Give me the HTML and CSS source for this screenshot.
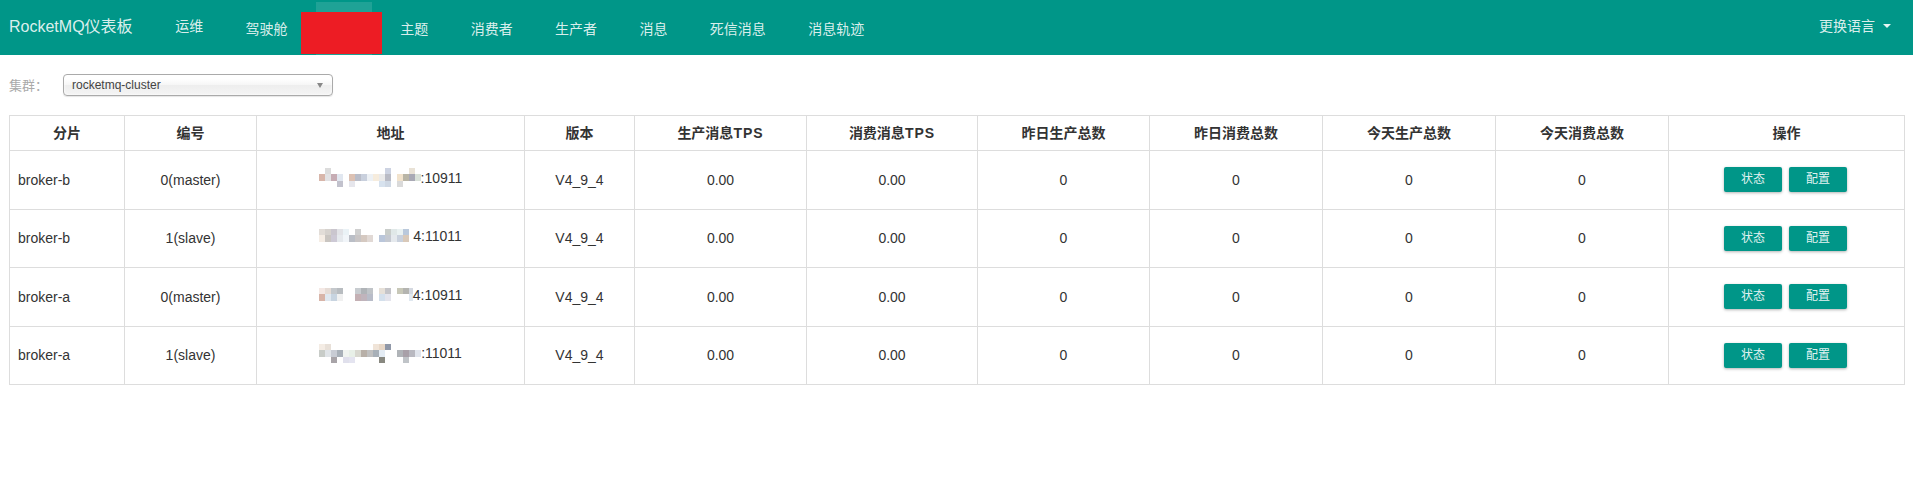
FILE: index.html
```html
<!DOCTYPE html>
<html lang="zh-CN">
<head>
<meta charset="utf-8">
<title>RocketMQ仪表板</title>
<link rel="stylesheet" href="styles.css">
</head>
<body>
<nav class="navbar">
  <div class="brand">RocketMQ仪表板</div>
  <ul class="nav-items">
    <li class="nav-item nav-item-up">运维</li>
    <li class="nav-item">驾驶舱</li>
    <li class="nav-item active">集群<span class="redact"></span></li>
    <li class="nav-item">主题</li>
    <li class="nav-item">消费者</li>
    <li class="nav-item">生产者</li>
    <li class="nav-item">消息</li>
    <li class="nav-item">死信消息</li>
    <li class="nav-item">消息轨迹</li>
  </ul>
  <div class="lang">更换语言<span class="caret"></span></div>
</nav>

<main class="content">
  <div class="filter-row">
    <label class="filter-label">集群：</label>
    <div class="select">
      <span class="select-text">rocketmq-cluster</span>
      <span class="select-arrow"></span>
    </div>
  </div>

  <table class="broker-table">
    <colgroup>
      <col class="c-shard"><col class="c-no"><col class="c-addr"><col class="c-ver">
      <col class="c-tps"><col class="c-tps2"><col class="c-num"><col class="c-num2">
      <col class="c-num3"><col class="c-num3"><col class="c-op">
    </colgroup>
    <thead>
      <tr>
        <th>分片</th><th>编号</th><th>地址</th><th>版本</th>
        <th>生产消息<span class="tps">TPS</span></th><th>消费消息<span class="tps">TPS</span></th><th>昨日生产总数</th><th>昨日消费总数</th>
        <th>今天生产总数</th><th>今天消费总数</th><th>操作</th>
      </tr>
    </thead>
    <tbody>
      <tr>
        <td class="left">broker-b</td>
        <td>0(master)</td>
        <td><span class="addr"><svg class="mosaic" width="102" height="19" viewBox="0 0 102 19">
          <rect x="6" y="0" width="6" height="6" fill="#dcdcdc"/>
          <rect x="66" y="0" width="6" height="6" fill="#cdd3e2"/>
          <rect x="90" y="0" width="6" height="6" fill="#e9e2d6"/>
          <rect x="0" y="6" width="6" height="7" fill="#d8b6aa"/>
          <rect x="6" y="6" width="6" height="7" fill="#e2e2e4"/>
          <rect x="12" y="6" width="6" height="7" fill="#c6acb4"/>
          <rect x="18" y="6" width="6" height="7" fill="#e1e7f0"/>
          <rect x="30" y="6" width="6" height="7" fill="#dcc1b3"/>
          <rect x="36" y="6" width="6" height="7" fill="#b9bdc9"/>
          <rect x="42" y="6" width="6" height="7" fill="#c9d0dd"/>
          <rect x="48" y="6" width="6" height="7" fill="#edf1f5"/>
          <rect x="54" y="6" width="6" height="7" fill="#f6ecdd"/>
          <rect x="60" y="6" width="6" height="7" fill="#eaeaea"/>
          <rect x="66" y="6" width="6" height="7" fill="#b9bbc5"/>
          <rect x="78" y="6" width="6" height="7" fill="#f2e3cd"/>
          <rect x="84" y="6" width="6" height="7" fill="#b9b5a6"/>
          <rect x="90" y="6" width="6" height="7" fill="#a9a9b5"/>
          <rect x="96" y="6" width="6" height="7" fill="#d9e1d9"/>
          <rect x="18" y="13" width="6" height="6" fill="#c2c2cd"/>
          <rect x="30" y="13" width="6" height="6" fill="#e6e6ec"/>
          <rect x="60" y="13" width="6" height="6" fill="#d7e2ee"/>
          <rect x="66" y="13" width="6" height="6" fill="#cfd8e4"/>
          <rect x="78" y="13" width="6" height="6" fill="#dadada"/>
        </svg>:10911</span></td>
        <td>V4_9_4</td>
        <td>0.00</td><td>0.00</td><td>0</td><td>0</td><td>0</td><td>0</td>
        <td><div class="ops"><button class="btn">状态</button><button class="btn">配置</button></div></td>
      </tr>
      <tr>
        <td class="left">broker-b</td>
        <td>1(slave)</td>
        <td><span class="addr"><svg class="mosaic" width="94" height="19" viewBox="0 0 94 19">
          <rect x="0" y="2" width="6" height="6" fill="#e2ddd8"/>
          <rect x="6" y="2" width="6" height="6" fill="#d6d2ce"/>
          <rect x="12" y="2" width="6" height="6" fill="#cac6ce"/>
          <rect x="18" y="2" width="6" height="6" fill="#e2e3e7"/>
          <rect x="24" y="2" width="6" height="6" fill="#eaf2f6"/>
          <rect x="36" y="2" width="6" height="6" fill="#cfcfcf"/>
          <rect x="66" y="2" width="6" height="6" fill="#c9cdca"/>
          <rect x="72" y="2" width="6" height="6" fill="#e0e8e8"/>
          <rect x="78" y="2" width="6" height="6" fill="#eaf2f2"/>
          <rect x="84" y="2" width="6" height="6" fill="#bac9dc"/>
          <rect x="0" y="8" width="6" height="7" fill="#f5ede5"/>
          <rect x="6" y="8" width="6" height="7" fill="#c9c5c1"/>
          <rect x="12" y="8" width="6" height="7" fill="#cdc9d5"/>
          <rect x="18" y="8" width="6" height="7" fill="#e5e9ed"/>
          <rect x="24" y="8" width="6" height="7" fill="#f1f5f9"/>
          <rect x="30" y="8" width="6" height="7" fill="#babec6"/>
          <rect x="36" y="8" width="6" height="7" fill="#c9c5c5"/>
          <rect x="42" y="8" width="6" height="7" fill="#d5c9c1"/>
          <rect x="48" y="8" width="6" height="7" fill="#e1d9d5"/>
          <rect x="60" y="8" width="6" height="7" fill="#bac6da"/>
          <rect x="66" y="8" width="6" height="7" fill="#c5c9d1"/>
          <rect x="72" y="8" width="6" height="7" fill="#e5e9ed"/>
          <rect x="78" y="8" width="6" height="7" fill="#c9d1dd"/>
          <rect x="84" y="8" width="6" height="7" fill="#d9c9b9"/>
        </svg>4:11011</span></td>
        <td>V4_9_4</td>
        <td>0.00</td><td>0.00</td><td>0</td><td>0</td><td>0</td><td>0</td>
        <td><div class="ops"><button class="btn">状态</button><button class="btn">配置</button></div></td>
      </tr>
      <tr>
        <td class="left">broker-a</td>
        <td>0(master)</td>
        <td><span class="addr"><svg class="mosaic" width="94" height="19" viewBox="0 0 94 19">
          <rect x="0" y="3" width="6" height="6" fill="#f4e8e4"/>
          <rect x="6" y="3" width="6" height="6" fill="#e6dcd6"/>
          <rect x="12" y="3" width="6" height="6" fill="#c4c8cc"/>
          <rect x="18" y="3" width="6" height="6" fill="#b8bcc0"/>
          <rect x="36" y="3" width="6" height="6" fill="#c8ccd0"/>
          <rect x="42" y="3" width="6" height="6" fill="#b0b4b8"/>
          <rect x="48" y="3" width="6" height="6" fill="#c0c4c8"/>
          <rect x="60" y="3" width="6" height="6" fill="#e6e0d8"/>
          <rect x="66" y="3" width="6" height="6" fill="#c4c4c8"/>
          <rect x="78" y="3" width="6" height="6" fill="#c8c8b8"/>
          <rect x="84" y="3" width="6" height="6" fill="#b4b4b0"/>
          <rect x="90" y="3" width="4" height="6" fill="#d4d8e0"/>
          <rect x="0" y="9" width="6" height="7" fill="#d8b4a8"/>
          <rect x="6" y="9" width="6" height="7" fill="#e0e8f0"/>
          <rect x="12" y="9" width="6" height="7" fill="#c8d4e0"/>
          <rect x="18" y="9" width="6" height="7" fill="#f0f0f0"/>
          <rect x="36" y="9" width="6" height="7" fill="#c4b0b4"/>
          <rect x="42" y="9" width="6" height="7" fill="#c0b4bc"/>
          <rect x="48" y="9" width="6" height="7" fill="#b8bcc8"/>
          <rect x="60" y="9" width="6" height="7" fill="#d4e0ec"/>
          <rect x="66" y="9" width="6" height="7" fill="#e4e4ec"/>
          <rect x="90" y="9" width="4" height="7" fill="#e0e8f0"/>
        </svg>4:10911</span></td>
        <td>V4_9_4</td>
        <td>0.00</td><td>0.00</td><td>0</td><td>0</td><td>0</td><td>0</td>
        <td><div class="ops"><button class="btn">状态</button><button class="btn">配置</button></div></td>
      </tr>
      <tr>
        <td class="left">broker-a</td>
        <td>1(slave)</td>
        <td><span class="addr"><svg class="mosaic" width="102" height="19" viewBox="0 0 102 19">
          <rect x="0" y="0" width="6" height="6" fill="#f4ece4"/>
          <rect x="6" y="0" width="6" height="6" fill="#e8e0d8"/>
          <rect x="54" y="0" width="6" height="6" fill="#f0e4d8"/>
          <rect x="60" y="0" width="6" height="6" fill="#e8d8c8"/>
          <rect x="66" y="0" width="6" height="6" fill="#9098a8"/>
          <rect x="0" y="6" width="6" height="7" fill="#c8ccc8"/>
          <rect x="6" y="6" width="6" height="7" fill="#e0e4e8"/>
          <rect x="12" y="6" width="6" height="7" fill="#c8ccd4"/>
          <rect x="18" y="6" width="6" height="7" fill="#a8b0b8"/>
          <rect x="24" y="6" width="6" height="7" fill="#f0f4f0"/>
          <rect x="30" y="6" width="6" height="7" fill="#e8f0e8"/>
          <rect x="36" y="6" width="6" height="7" fill="#d8d8d0"/>
          <rect x="42" y="6" width="6" height="7" fill="#b8b0a8"/>
          <rect x="48" y="6" width="6" height="7" fill="#c0c0c0"/>
          <rect x="54" y="6" width="6" height="7" fill="#a8b0b8"/>
          <rect x="60" y="6" width="6" height="7" fill="#e4ecf4"/>
          <rect x="78" y="6" width="6" height="7" fill="#b0b4b8"/>
          <rect x="84" y="6" width="6" height="7" fill="#a8a0a8"/>
          <rect x="90" y="6" width="6" height="7" fill="#b8b8c0"/>
          <rect x="96" y="6" width="6" height="7" fill="#e0e4ec"/>
          <rect x="12" y="13" width="6" height="6" fill="#a8a4a8"/>
          <rect x="24" y="13" width="6" height="6" fill="#e0e0ec"/>
          <rect x="30" y="13" width="6" height="6" fill="#e4e4f0"/>
          <rect x="60" y="13" width="6" height="6" fill="#888880"/>
          <rect x="84" y="13" width="6" height="6" fill="#c0c4c8"/>
        </svg>:11011</span></td>
        <td>V4_9_4</td>
        <td>0.00</td><td>0.00</td><td>0</td><td>0</td><td>0</td><td>0</td>
        <td><div class="ops"><button class="btn">状态</button><button class="btn">配置</button></div></td>
      </tr>
    </tbody>
  </table>
</main>
</body>
</html>
```

FILE: styles.css
```css
* { box-sizing: border-box; }

html, body {
  margin: 0;
  padding: 0;
  background: #fff;
}

body {
  font-family: "Liberation Sans", "Noto Sans CJK SC", sans-serif;
  font-size: 14px;
  color: #333;
}

/* ---------- navbar ---------- */
.navbar {
  display: flex;
  align-items: stretch;
  height: 55px;
  background: #009688;
  color: rgba(255, 255, 255, 0.87);
}

.brand {
  flex: 0 0 154px;
  display: flex;
  align-items: center;
  padding-left: 9px;
  padding-bottom: 2px;
  font-size: 16px;
  line-height: 1;
  white-space: nowrap;
}

.nav-items {
  display: flex;
  list-style: none;
  margin: 0;
  padding: 0;
}

.nav-item {
  position: relative;
  display: flex;
  align-items: center;
  margin: 2px 7.2px 0;
  padding: 1px 14px 0;
  font-size: 14px;
  line-height: 1;
  white-space: nowrap;
}

.nav-item-up {
  padding-top: 0;
  padding-bottom: 5px;
}

.nav-item.active {
  background: rgba(255, 255, 255, 0.12);
}

.redact {
  position: absolute;
  left: -15px;
  top: 10px;
  width: 81px;
  height: 42px;
  background: #ed1c24;
}

.lang {
  margin-left: auto;
  display: flex;
  align-items: center;
  padding-right: 22px;
  padding-bottom: 4px;
  font-size: 14px;
  line-height: 1;
}

.caret {
  display: inline-block;
  width: 0;
  height: 0;
  margin-left: 8px;
  border-top: 4px solid rgba(255, 255, 255, 0.9);
  border-left: 4px solid transparent;
  border-right: 4px solid transparent;
}

/* ---------- content ---------- */
.content {
  padding: 19px 8px 0 9px;
}

.filter-row {
  display: flex;
  align-items: center;
  height: 22px;
}

.filter-label {
  flex: 0 0 54px;
  font-size: 13px;
  color: #aaa;
  line-height: 1;
}

.select {
  position: relative;
  display: flex;
  align-items: center;
  width: 270px;
  height: 22px;
  padding-left: 8px;
  border: 1px solid #aaa;
  border-radius: 4px;
  background: linear-gradient(#fff 20%, #f6f6f6 50%, #eee 52%, #f4f4f4 100%);
  box-shadow: inset 0 0 3px #fff, 0 1px 1px rgba(0, 0, 0, 0.1);
  font-size: 12px;
  color: #444;
  line-height: 1;
}

.select-arrow {
  position: absolute;
  right: 9px;
  top: 8px;
  width: 0;
  height: 0;
  border-top: 5px solid #888;
  border-left: 3px solid transparent;
  border-right: 3px solid transparent;
}

/* ---------- table ---------- */
.broker-table {
  width: 100%;
  margin-top: 19px;
  border-collapse: collapse;
  table-layout: fixed;
  border: 1px solid #ddd;
}

.c-shard { width: 115px; }
.c-no    { width: 132px; }
.c-addr  { width: 268px; }
.c-ver   { width: 110px; }
.c-tps   { width: 172px; }
.c-tps2  { width: 171px; }
.c-num   { width: 172px; }
.c-num2  { width: 173px; }
.c-num3  { width: 173px; }
.c-op    { width: 236px; }

.broker-table th,
.broker-table td {
  border: 1px solid #ddd;
  text-align: center;
  vertical-align: middle;
  padding: 0 8px;
  line-height: 20px;
  white-space: nowrap;
}

.broker-table th {
  height: 35px;
  font-weight: bold;
  color: #333;
}

.tps {
  letter-spacing: 1px;
}

.broker-table td {
  height: 58.5px;
  color: #333;
}

.broker-table td.left {
  text-align: left;
}

.addr {
  display: inline-flex;
  align-items: center;
}

.mosaic {
  display: block;
}

.ops {
  display: flex;
  justify-content: center;
  gap: 7px;
  padding-right: 2px;
}

.btn {
  width: 58px;
  height: 25px;
  padding: 0;
  border: none;
  border-radius: 2px;
  background: #009688;
  color: rgba(255, 255, 255, 0.9);
  font-family: "Liberation Sans", "Noto Sans CJK SC", sans-serif;
  font-size: 12px;
  line-height: 25px;
  box-shadow: 0 1px 3px rgba(0, 0, 0, 0.3);
}
```
